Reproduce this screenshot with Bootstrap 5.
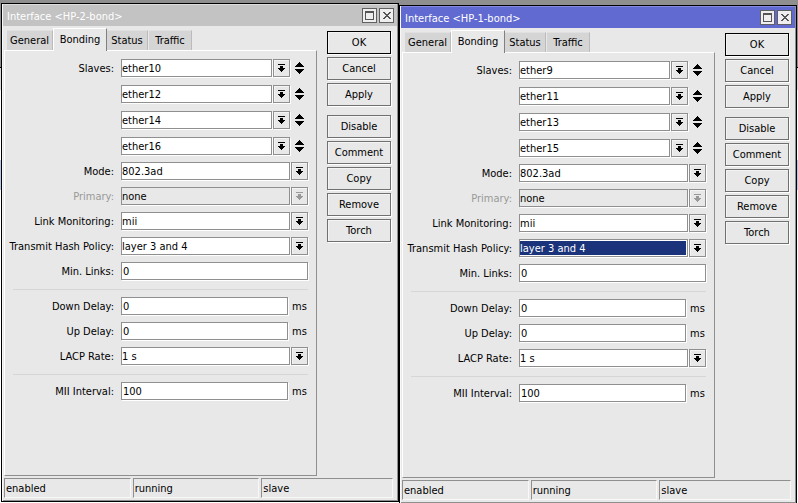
<!DOCTYPE html>
<html lang="en">
<head>
<meta charset="utf-8">
<meta name="viewport" content="width=device-width, initial-scale=1">
<title>Bonding interfaces</title>
<link href="https://cdn.jsdelivr.net/npm/bootstrap@5.3.0/dist/css/bootstrap.min.css" rel="stylesheet">
<style>
:root { --face: #e8e8e8; --edge: #8f8f8f; }
body { font: 11px/14px "DejaVu Sans Condensed", "DejaVu Sans", sans-serif; color: #000;
  background: linear-gradient(#8f8f8f 67px, #000 67px, #000 68px, #d8d8d8 68px, #d8d8d8 90px, #fff 90px, #fff 160px, #b5c8f0 160px, #b5c8f0 190px, #fff 190px); }
.desktop { padding: 0 1px; }
.win { flex: 1 1 0; min-width: 0; background: var(--face); border: 1px solid #000; margin: 3px 0 1px;
  box-shadow: inset 1px 0 #f8f8f8, inset -1px -1px var(--edge); padding: 0 1px 1px; }
.win-front { margin: 5px 0 -1px; }
.win-title { background: #c3c3c3; color: #fff; height: 22px; padding: 0 3px 0 4px; border-top: 1px solid #ddd; }
.win-front .win-title { background: #616ad0; border-top-color: #8289df; }
.win-title h1 { font-size: 11px; line-height: 18px; font-weight: 400; padding-top: 2px; }
.win-tool { width: 15px; height: 15px; padding: 0; background: #f0eff0; color: #555; border: 1px solid #606060; display: grid; place-items: center; }
.win-title .d-flex { gap: 2px; }
.tabs { padding: 2px 0 0 4px; }
.tab { background: #d5d5d5; border: 0; border-right: 1px solid #bbb; border-top: 1px solid #e0e0e0; height: 20px; padding: 1px 3px 0; }
.tab-general { width: 46px; }
.tab-bonding { width: 54px; }
.tab-status { width: 41px; }
.tab-traffic { width: 43px; margin-left: 1px; }
.tab.active { background: var(--face); height: 23px; margin-bottom: -1px; padding-bottom: 2px; border-top-color: #fff; border-left: 1px solid #fff; border-right-color: #808080; position: relative; }
.pane { border: 1px solid; border-color: #fff var(--edge) var(--edge) #fff; padding: 8px 8px 0 0; margin-left: 1px; }
.line { display: flex; align-items: center; height: 18px; margin-bottom: 7px; }
.line-slave { margin-bottom: 8px; }
.line > label, .blank { width: 109px; margin-right: 7px; padding-top: 2px; text-align: right; white-space: nowrap; flex: none; }
.line > .dim { color: #999; }
.field { flex: 1 1 0; min-width: 0; height: 18px; border: 1px solid var(--edge); border-radius: 0; background: #fff; color: #000;
  padding: 1px 1px 0; font: inherit; appearance: none; box-shadow: 1px 1px #fff; outline: 0; }
select.field { padding: 1px 0 0; }
.field:disabled { background: var(--face); opacity: 1; }
.field.picked { background: #1a337a; color: #fff; box-shadow: inset -1px -1px #fff, inset 0 1px #fff, 1px 1px #fff; }
.drop { width: 17px; height: 18px; padding: 0; margin-left: 1px; border: 1px solid var(--edge); background: var(--face); color: #000; flex: none; box-shadow: 1px 1px #fff, inset 1px 1px #f4f4f4; display: grid; place-items: center; }
.drop:disabled { color: #999; }
.move { width: 18px; height: 18px; padding: 0 0 0 1px; border: 0; background: none; color: #000; flex: none; display: grid; place-items: center; }
.unit { width: 20px; padding: 2px 0 0 4px; flex: none; }
.rule { height: 1px; background: #d6d6d6; margin: 9px 0 7px 8px; }
.acts { width: 64px; margin: 5px 6px 0 10px; gap: 3px; flex: none; }
.act { height: 23px; padding: 1px 0 0; border: 1px solid #707070; background: var(--face); box-shadow: 1px 1px #fff, inset 1px 1px #f4f4f4; }
.act-ok { border-color: #000; }
.act-gap { margin-top: 6px; }
.foot { padding: 2px 4px 2px 1px; gap: 2px; }
.foot div { flex: 1 1 4px; height: 20px; border: 1px solid; border-color: var(--edge) #f8f8f8 #f8f8f8 var(--edge); padding: 3px 1px 0; }
.foot div:last-child { flex-basis: 9px; }
button { color: #000; border-radius: 0; }
svg { display: block; fill: currentColor; shape-rendering: crispEdges; }
</style>
<script src="https://cdn.jsdelivr.net/npm/bootstrap@5.3.0/dist/js/bootstrap.bundle.min.js"></script>
</head>
<body>
<svg class="d-none">
  <symbol id="i-drop" viewBox="0 0 7 8"><path d="M0 0h7v1H0zM2 2h3v2h2v1H6v1H5v1H4v1H3V7H2V6H1V5H0V4h2z"/></symbol>
  <symbol id="i-move" viewBox="0 0 9 12"><path d="M4 0h1v1h1v1h1v1h1v1h1v1H0V4h1V3h1V2h1V1h1zM0 7h9v1H8v1H7v1H6v1H5v1H4v-1H3v-1H2V9H1V8H0z"/></symbol>
  <symbol id="i-max" viewBox="0 0 9 9"><path fill-rule="evenodd" d="M0 0h9v9H0zM1 2v6h7V2z"/></symbol>
  <symbol id="i-close" viewBox="0 0 8 7"><path d="M0 0h2v1h1v1h2V1h1V0h2v1H7v1H6v1H5v1h1v1h1v1h1v1H6V6H5V5H3v1H2v1H0V6h1V5h1V4h1V3H2V2H1V1H0z"/></symbol>
</svg>
<div class="desktop d-flex vh-100 overflow-hidden">
  <section class="win d-flex flex-column">
    <header class="win-title d-flex align-items-center justify-content-between">
      <h1 class="m-0">Interface &lt;HP-2-bond&gt;</h1>
      <div class="d-flex">
        <button class="win-tool" aria-label="Maximize"><svg width="9" height="9"><use href="#i-max"/></svg></button>
        <button class="win-tool" aria-label="Close"><svg width="8" height="7"><use href="#i-close"/></svg></button>
      </div>
    </header>
    <div class="d-flex flex-fill">
      <div class="d-flex flex-column flex-fill">
        <div class="tabs d-flex align-items-end" role="tablist">
          <button class="tab tab-general" role="tab">General</button>
          <button class="tab tab-bonding active" role="tab" aria-selected="true">Bonding</button>
          <button class="tab tab-status" role="tab">Status</button>
          <button class="tab tab-traffic" role="tab">Traffic</button>
        </div>
        <form class="pane flex-fill">
          <div class="line line-slave"><label for="a1">Slaves:</label><select class="field" id="a1"><option>ether10</option></select><button type="button" class="drop" aria-label="Open list"><svg width="7" height="8"><use href="#i-drop"/></svg></button><button type="button" class="move" aria-label="Add or remove"><svg width="9" height="12"><use href="#i-move"/></svg></button></div>
          <div class="line line-slave"><span class="blank"></span><select class="field" aria-label="Slave 2"><option>ether12</option></select><button type="button" class="drop" aria-label="Open list"><svg width="7" height="8"><use href="#i-drop"/></svg></button><button type="button" class="move" aria-label="Add or remove"><svg width="9" height="12"><use href="#i-move"/></svg></button></div>
          <div class="line line-slave"><span class="blank"></span><select class="field" aria-label="Slave 3"><option>ether14</option></select><button type="button" class="drop" aria-label="Open list"><svg width="7" height="8"><use href="#i-drop"/></svg></button><button type="button" class="move" aria-label="Add or remove"><svg width="9" height="12"><use href="#i-move"/></svg></button></div>
          <div class="line"><span class="blank"></span><select class="field" aria-label="Slave 4"><option>ether16</option></select><button type="button" class="drop" aria-label="Open list"><svg width="7" height="8"><use href="#i-drop"/></svg></button><button type="button" class="move" aria-label="Add or remove"><svg width="9" height="12"><use href="#i-move"/></svg></button></div>
          <div class="line"><label for="a2">Mode:</label><select class="field" id="a2"><option>802.3ad</option></select><button type="button" class="drop" aria-label="Open list"><svg width="7" height="8"><use href="#i-drop"/></svg></button></div>
          <div class="line"><label class="dim" for="a3">Primary:</label><select class="field" id="a3" disabled><option>none</option></select><button type="button" class="drop" disabled aria-label="Open list"><svg width="7" height="8"><use href="#i-drop"/></svg></button></div>
          <div class="line"><label for="a4">Link Monitoring:</label><select class="field" id="a4"><option>mii</option></select><button type="button" class="drop" aria-label="Open list"><svg width="7" height="8"><use href="#i-drop"/></svg></button></div>
          <div class="line"><label for="a5">Transmit Hash Policy:</label><select class="field" id="a5"><option>layer 3 and 4</option></select><button type="button" class="drop" aria-label="Open list"><svg width="7" height="8"><use href="#i-drop"/></svg></button></div>
          <div class="line"><label for="a6">Min. Links:</label><input class="field" id="a6" value="0"></div>
          <div class="rule"></div>
          <div class="line"><label for="a7">Down Delay:</label><input class="field" id="a7" value="0"><span class="unit">ms</span></div>
          <div class="line"><label for="a8">Up Delay:</label><input class="field" id="a8" value="0"><span class="unit">ms</span></div>
          <div class="line"><label for="a9">LACP Rate:</label><select class="field" id="a9"><option>1 s</option></select><button type="button" class="drop" aria-label="Open list"><svg width="7" height="8"><use href="#i-drop"/></svg></button></div>
          <div class="rule"></div>
          <div class="line"><label for="a10">MII Interval:</label><input class="field" id="a10" value="100"><span class="unit">ms</span></div>
        </form>
      </div>
      <div class="acts d-flex flex-column">
        <button class="act act-ok">OK</button>
        <button class="act">Cancel</button>
        <button class="act">Apply</button>
        <button class="act act-gap">Disable</button>
        <button class="act">Comment</button>
        <button class="act">Copy</button>
        <button class="act">Remove</button>
        <button class="act">Torch</button>
      </div>
    </div>
    <footer class="foot d-flex"><div>enabled</div><div>running</div><div>slave</div></footer>
  </section>

  <section class="win win-front d-flex flex-column">
    <header class="win-title d-flex align-items-center justify-content-between">
      <h1 class="m-0">Interface &lt;HP-1-bond&gt;</h1>
      <div class="d-flex">
        <button class="win-tool" aria-label="Maximize"><svg width="9" height="9"><use href="#i-max"/></svg></button>
        <button class="win-tool" aria-label="Close"><svg width="8" height="7"><use href="#i-close"/></svg></button>
      </div>
    </header>
    <div class="d-flex flex-fill">
      <div class="d-flex flex-column flex-fill">
        <div class="tabs d-flex align-items-end" role="tablist">
          <button class="tab tab-general" role="tab">General</button>
          <button class="tab tab-bonding active" role="tab" aria-selected="true">Bonding</button>
          <button class="tab tab-status" role="tab">Status</button>
          <button class="tab tab-traffic" role="tab">Traffic</button>
        </div>
        <form class="pane flex-fill">
          <div class="line line-slave"><label for="b1">Slaves:</label><select class="field" id="b1"><option>ether9</option></select><button type="button" class="drop" aria-label="Open list"><svg width="7" height="8"><use href="#i-drop"/></svg></button><button type="button" class="move" aria-label="Add or remove"><svg width="9" height="12"><use href="#i-move"/></svg></button></div>
          <div class="line line-slave"><span class="blank"></span><select class="field" aria-label="Slave 2"><option>ether11</option></select><button type="button" class="drop" aria-label="Open list"><svg width="7" height="8"><use href="#i-drop"/></svg></button><button type="button" class="move" aria-label="Add or remove"><svg width="9" height="12"><use href="#i-move"/></svg></button></div>
          <div class="line line-slave"><span class="blank"></span><select class="field" aria-label="Slave 3"><option>ether13</option></select><button type="button" class="drop" aria-label="Open list"><svg width="7" height="8"><use href="#i-drop"/></svg></button><button type="button" class="move" aria-label="Add or remove"><svg width="9" height="12"><use href="#i-move"/></svg></button></div>
          <div class="line"><span class="blank"></span><select class="field" aria-label="Slave 4"><option>ether15</option></select><button type="button" class="drop" aria-label="Open list"><svg width="7" height="8"><use href="#i-drop"/></svg></button><button type="button" class="move" aria-label="Add or remove"><svg width="9" height="12"><use href="#i-move"/></svg></button></div>
          <div class="line"><label for="b2">Mode:</label><select class="field" id="b2"><option>802.3ad</option></select><button type="button" class="drop" aria-label="Open list"><svg width="7" height="8"><use href="#i-drop"/></svg></button></div>
          <div class="line"><label class="dim" for="b3">Primary:</label><select class="field" id="b3" disabled><option>none</option></select><button type="button" class="drop" disabled aria-label="Open list"><svg width="7" height="8"><use href="#i-drop"/></svg></button></div>
          <div class="line"><label for="b4">Link Monitoring:</label><select class="field" id="b4"><option>mii</option></select><button type="button" class="drop" aria-label="Open list"><svg width="7" height="8"><use href="#i-drop"/></svg></button></div>
          <div class="line"><label for="b5">Transmit Hash Policy:</label><select class="field picked" id="b5"><option>layer 3 and 4</option></select><button type="button" class="drop" aria-label="Open list"><svg width="7" height="8"><use href="#i-drop"/></svg></button></div>
          <div class="line"><label for="b6">Min. Links:</label><input class="field" id="b6" value="0"></div>
          <div class="rule"></div>
          <div class="line"><label for="b7">Down Delay:</label><input class="field" id="b7" value="0"><span class="unit">ms</span></div>
          <div class="line"><label for="b8">Up Delay:</label><input class="field" id="b8" value="0"><span class="unit">ms</span></div>
          <div class="line"><label for="b9">LACP Rate:</label><select class="field" id="b9"><option>1 s</option></select><button type="button" class="drop" aria-label="Open list"><svg width="7" height="8"><use href="#i-drop"/></svg></button></div>
          <div class="rule"></div>
          <div class="line"><label for="b10">MII Interval:</label><input class="field" id="b10" value="100"><span class="unit">ms</span></div>
        </form>
      </div>
      <div class="acts d-flex flex-column">
        <button class="act act-ok">OK</button>
        <button class="act">Cancel</button>
        <button class="act">Apply</button>
        <button class="act act-gap">Disable</button>
        <button class="act">Comment</button>
        <button class="act">Copy</button>
        <button class="act">Remove</button>
        <button class="act">Torch</button>
      </div>
    </div>
    <footer class="foot d-flex"><div>enabled</div><div>running</div><div>slave</div></footer>
  </section>
</div>
</body>
</html>
